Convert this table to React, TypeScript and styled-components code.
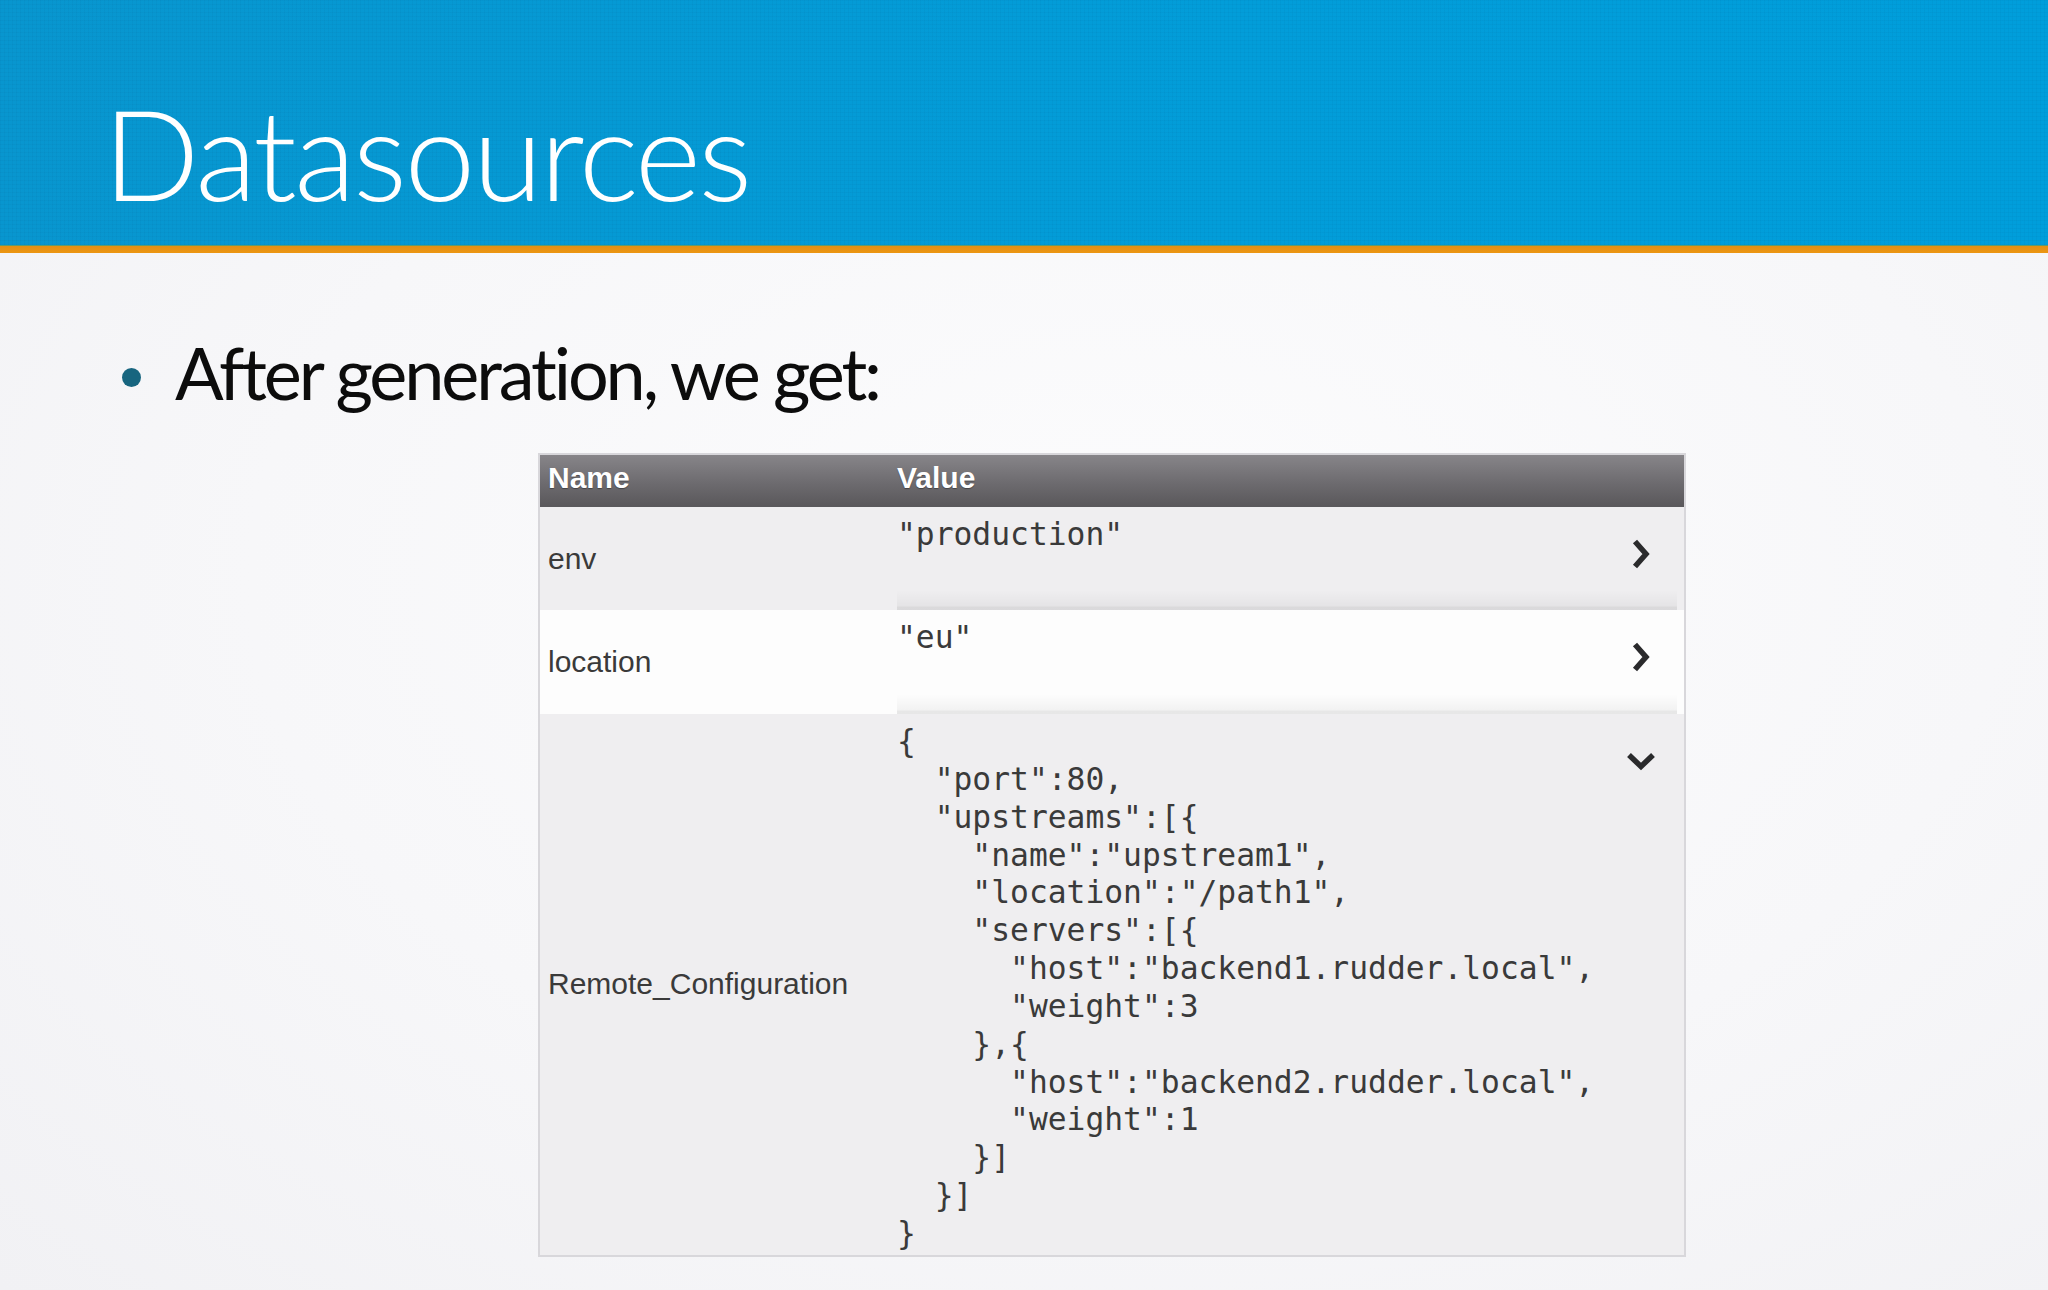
import React from "react";
import styled, { createGlobalStyle } from "styled-components";

const GlobalStyle = createGlobalStyle`
  html, body {
    margin: 0;
    padding: 0;
  }
  body {
    background: #f7f7f9;
    font-family: "Liberation Sans", Arial, sans-serif;
  }
`;

const Slide = styled.div`
  width: 2048px;
  height: 1290px;
  overflow: hidden;
  display: flex;
  flex-direction: column;
  background: radial-gradient(ellipse at 55% 45%, #fcfcfd 0%, #f7f7f9 55%, #f1f1f4 100%);
`;

const TitleBar = styled.header`
  height: 245px;
  box-sizing: border-box;
  padding: 89px 0 0 103px;
  background-color: #069bd6;
  background-image:
    repeating-linear-gradient(0deg, rgba(0, 40, 80, 0.035) 0 1px, transparent 1px 4px),
    repeating-linear-gradient(90deg, rgba(0, 40, 80, 0.035) 0 1px, transparent 1px 4px),
    linear-gradient(90deg, #0896cf 0%, #029dd9 60%, #009edb 100%);
`;

const Title = styled.h1`
  margin: 0;
  font-family: Lato, "Open Sans", sans-serif;
  font-weight: 300;
  font-size: 127px;
  line-height: 127px;
  letter-spacing: -2.6px;
  color: #ffffff;
`;

const AccentRule = styled.div`
  height: 8px;
  background: linear-gradient(180deg, #5e9a6c 0 1px, #e38f14 1px, #ec9612 100%);
`;

const Body = styled.main`
  display: flex;
  flex-direction: column;
  padding-top: 83px;
`;

const Bullet = styled.div`
  display: flex;
  align-items: center;
  padding-left: 122px;
  gap: 34px;
`;

const Dot = styled.span`
  width: 19px;
  height: 19px;
  border-radius: 50%;
  background: #17657f;
  margin-top: 10px;
  flex: none;
`;

const BulletText = styled.p`
  margin: 0;
  font-family: Lato, "Open Sans", sans-serif;
  font-weight: 400;
  font-size: 72px;
  line-height: 72px;
  letter-spacing: -3.1px;
  color: #0c0c0c;
`;

const Table = styled.div`
  margin: 45px 0 0 538px;
  width: 1148px;
  box-sizing: border-box;
  border: 2px solid #d8d7db;
  display: flex;
  flex-direction: column;
`;

const HeaderRow = styled.div`
  display: grid;
  grid-template-columns: 357px 1fr;
  height: 51px;
  align-items: center;
  background: linear-gradient(180deg, #878589 0%, #6d6b6f 55%, #5a585b 100%);
  border-bottom: 1px solid #5a595c;
`;

const HeadCell = styled.div<{ $pad: number }>`
  padding-left: ${(p) => p.$pad}px;
  padding-bottom: 5px;
  font-family: "Liberation Sans", Arial, sans-serif;
  font-weight: 700;
  font-size: 30px;
  color: #ffffff;
  text-shadow: 0 1px 1px rgba(0, 0, 0, 0.35);
`;

const Row = styled.div<{ $bg: string }>`
  display: grid;
  grid-template-columns: 357px 1fr;
  background: ${(p) => p.$bg};
`;

const NameCell = styled.div`
  display: flex;
  align-items: center;
  padding-left: 8px;
  font-family: "Liberation Sans", Arial, sans-serif;
  font-size: 30px;
  color: #3a3a3a;
`;

const ValueWrap = styled.div`
  padding-right: 7px;
`;

const ValueBox = styled.div<{ $collapsed: boolean; $height?: number }>`
  display: flex;
  align-items: flex-start;
  min-height: ${(p) => (p.$height ? `${p.$height}px` : "auto")};
  box-sizing: border-box;
  background: ${(p) =>
    p.$collapsed
      ? "linear-gradient(180deg, rgba(0,0,0,0) calc(100% - 20px), rgba(0,0,0,0.045) calc(100% - 4px), rgba(0,0,0,0.085) calc(100% - 3px), rgba(0,0,0,0.085) 100%)"
      : "transparent"};
`;

const Code = styled.pre`
  flex: 1;
  margin: 0;
  padding: 9px 0 2px 0;
  font-family: "DejaVu Sans Mono", "Liberation Mono", monospace;
  font-size: 31.3px;
  line-height: 37.85px;
  color: #3a3a3a;
  white-space: pre;
`;

const Toggle = styled.button`
  flex: none;
  width: 36px;
  height: 36px;
  margin: 29px 18px 0 0;
  padding: 0;
  border: 0;
  background: transparent;
  display: flex;
  align-items: center;
  justify-content: center;
  cursor: pointer;
`;

const Chevron = ({ open }: { open: boolean }) => (
  <svg width="36" height="36" viewBox="0 0 36 36">
    {open ? (
      <polyline points="6,12 18,23.5 30,12" fill="none" stroke="#2a2a2c" strokeWidth="5.5" />
    ) : (
      <polyline points="12,5.5 23,18 12,30.5" fill="none" stroke="#2a2a2c" strokeWidth="5.5" />
    )}
  </svg>
);

const remoteConfig = `{
  "port":80,
  "upstreams":[{
    "name":"upstream1",
    "location":"/path1",
    "servers":[{
      "host":"backend1.rudder.local",
      "weight":3
    },{
      "host":"backend2.rudder.local",
      "weight":1
    }]
  }]
}`;

type Entry = { name: string; value: string; open: boolean; bg: string; height?: number };

const entries: Entry[] = [
  { name: "env", value: '"production"', open: false, bg: "#efeef0", height: 103 },
  { name: "location", value: '"eu"', open: false, bg: "#fdfdfd", height: 104 },
  { name: "Remote_Configuration", value: remoteConfig, open: true, bg: "#efeef0" },
];

export default function App() {
  return (
    <>
      <GlobalStyle />
      <Slide>
        <TitleBar>
          <Title>Datasources</Title>
        </TitleBar>
        <AccentRule />
        <Body>
          <Bullet>
            <Dot />
            <BulletText>After generation, we get:</BulletText>
          </Bullet>
          <Table>
            <HeaderRow>
              <HeadCell $pad={8}>Name</HeadCell>
              <HeadCell $pad={0}>Value</HeadCell>
            </HeaderRow>
            {entries.map((e) => (
              <Row key={e.name} $bg={e.bg}>
                <NameCell>{e.name}</NameCell>
                <ValueWrap>
                  <ValueBox $collapsed={!e.open} $height={e.height}>
                    <Code>{e.value}</Code>
                    <Toggle aria-label={e.open ? "collapse" : "expand"}>
                      <Chevron open={e.open} />
                    </Toggle>
                  </ValueBox>
                </ValueWrap>
              </Row>
            ))}
          </Table>
        </Body>
      </Slide>
    </>
  );
}
